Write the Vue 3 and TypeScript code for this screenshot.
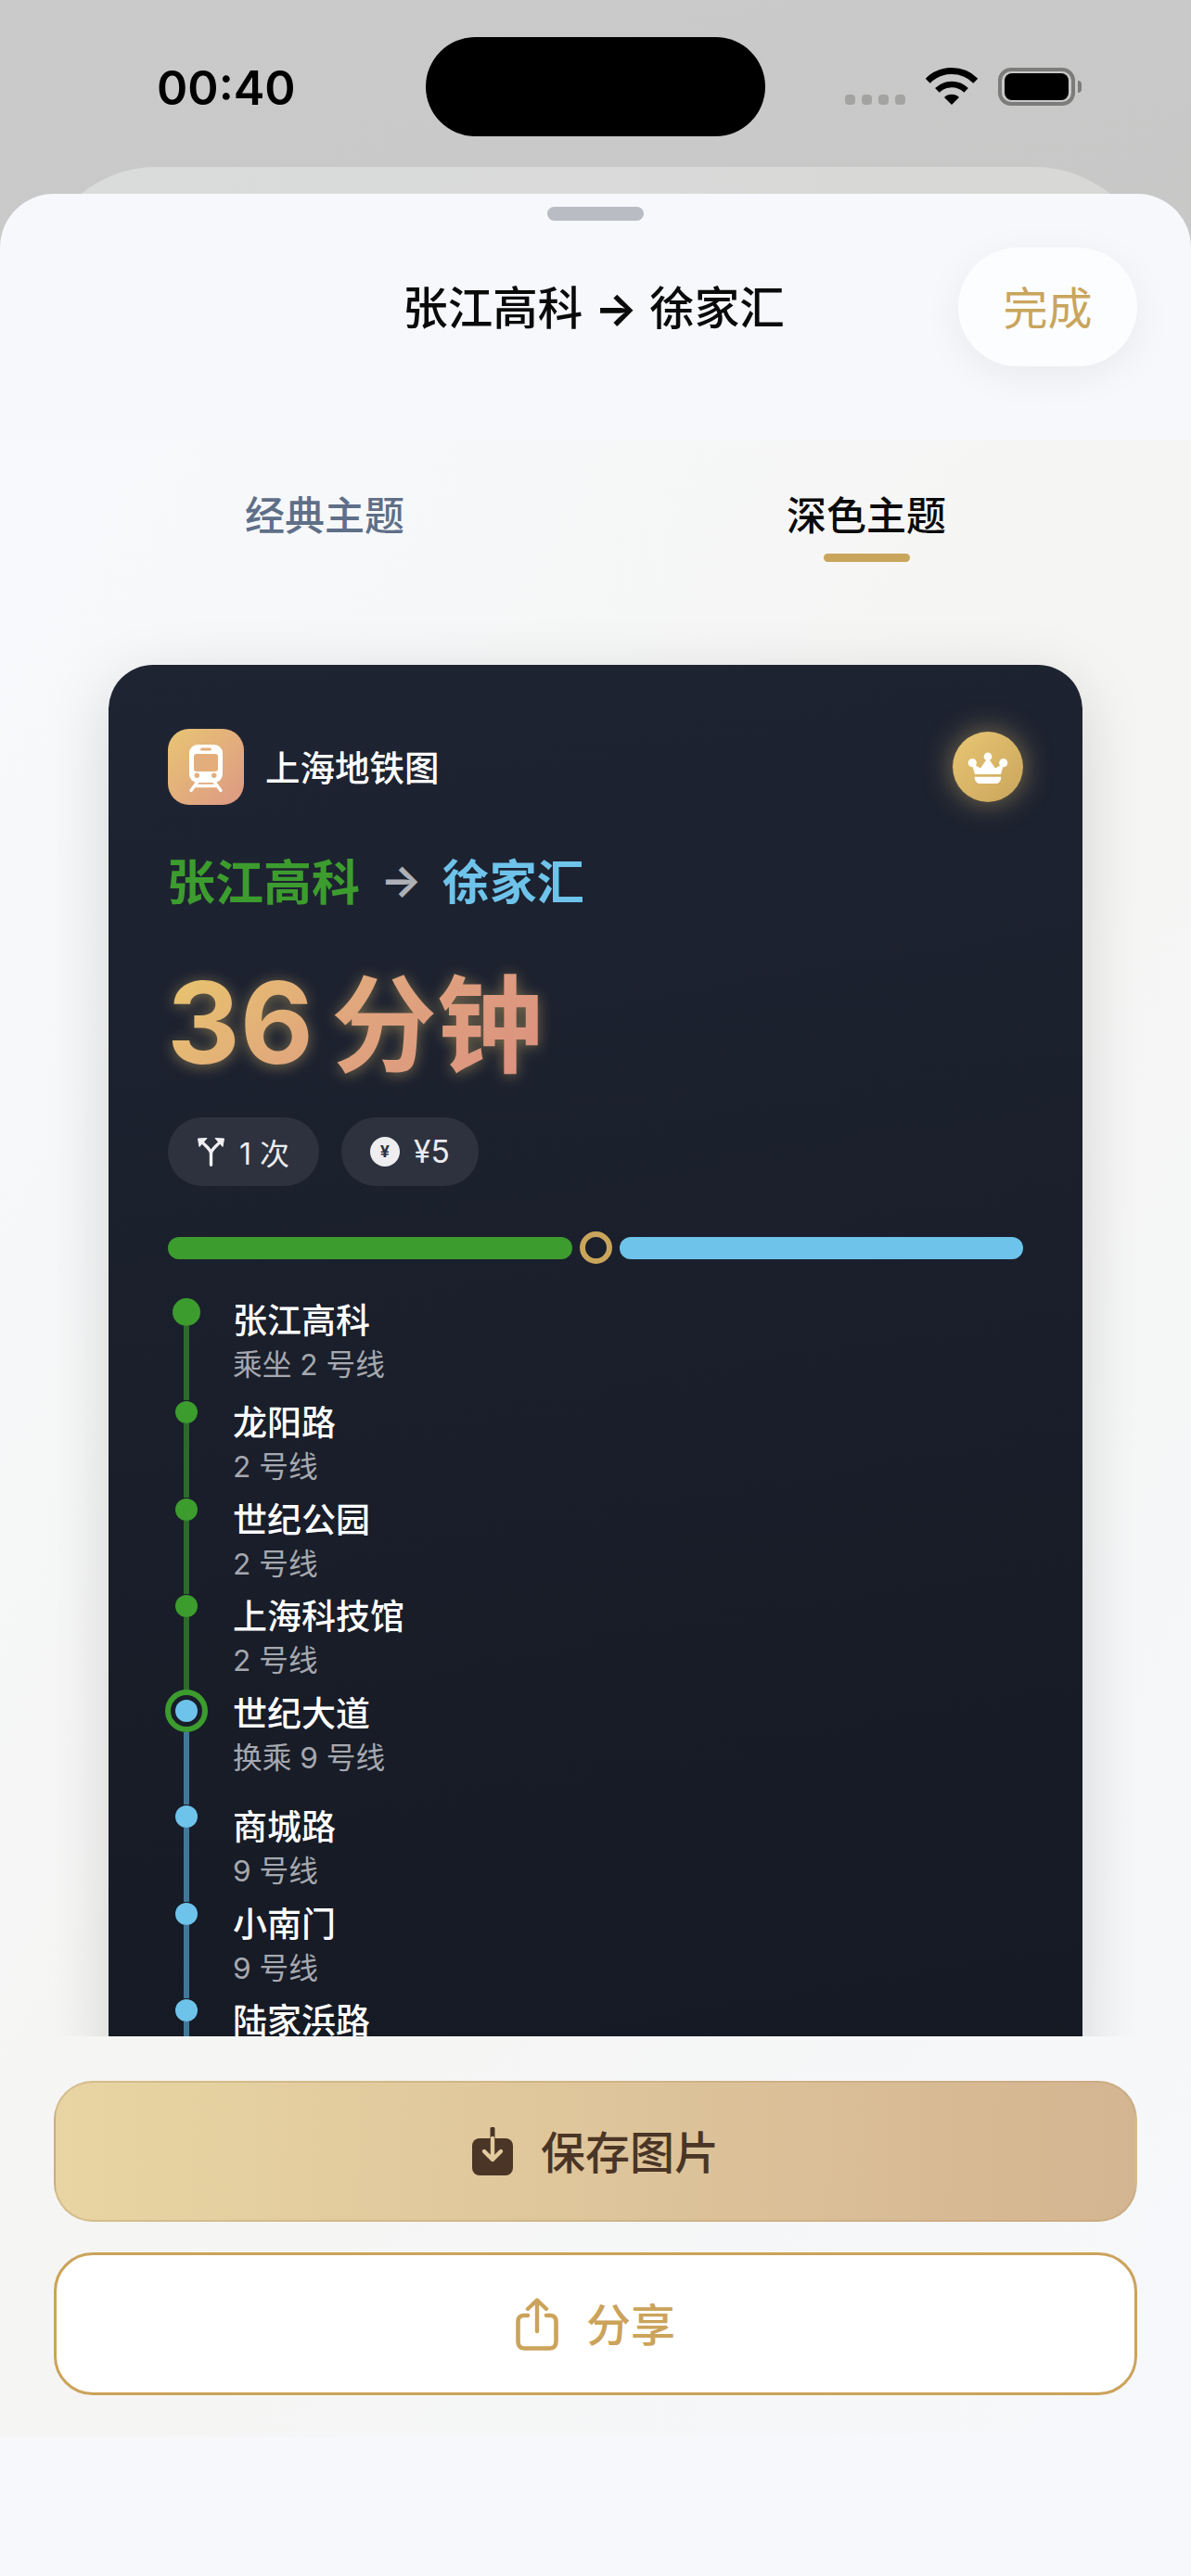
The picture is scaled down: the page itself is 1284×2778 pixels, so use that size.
<script setup lang="ts">
interface Stop {
  name: string
  sub: string
  line: 'green' | 'blue'
  kind: 'start' | 'normal' | 'transfer'
}

const stops: Stop[] = [
  { name: '张江高科', sub: '乘坐 2 号线', line: 'green', kind: 'start' },
  { name: '龙阳路', sub: '2 号线', line: 'green', kind: 'normal' },
  { name: '世纪公园', sub: '2 号线', line: 'green', kind: 'normal' },
  { name: '上海科技馆', sub: '2 号线', line: 'green', kind: 'normal' },
  { name: '世纪大道', sub: '换乘 9 号线', line: 'blue', kind: 'transfer' },
  { name: '商城路', sub: '9 号线', line: 'blue', kind: 'normal' },
  { name: '小南门', sub: '9 号线', line: 'blue', kind: 'normal' },
  { name: '陆家浜路', sub: '9 号线', line: 'blue', kind: 'normal' }
]
</script>

<template>
  <div class="screen">
    <div class="status">
      <div class="time">00:40</div>
      <div class="island"></div>
      <div class="indicators">
        <div class="signal"><i></i><i></i><i></i><i></i></div>
        <svg class="wifi" viewBox="0 0 56 40" width="56" height="40">
          <path d="M2.2 14.2A36.5 36.5 0 0 1 53.8 14.2" fill="none" stroke="#000" stroke-width="7" />
          <path d="M12.4 24.4A22 22 0 0 1 43.6 24.4" fill="none" stroke="#000" stroke-width="6.5" />
          <path d="M28 40L20 32A11.3 11.3 0 0 1 36 32Z" fill="#000" />
        </svg>
        <div class="battery"><div class="battery-fill"></div></div>
        <div class="battery-nub"></div>
      </div>
    </div>
    <div class="back-peek"><div class="back-card"></div></div>

    <main class="sheet">
      <div class="handle"></div>
      <header class="sheet-header">
        <span></span>
        <h1 class="title">张江高科 <span class="title-arrow">→</span> 徐家汇</h1>
        <button class="done">完成</button>
      </header>

      <section class="body">
        <nav class="tabs">
          <div class="tab">经典主题</div>
          <div class="tab active">深色主题<span class="tab-bar"></span></div>
        </nav>

        <div class="viewport">
          <article class="card">
            <div class="brand-row">
              <div class="brand">
                <svg class="app-icon" viewBox="0 0 82 82" width="82" height="82">
                  <defs>
                    <linearGradient id="appGrad" x1="0" y1="0" x2="1" y2="1">
                      <stop offset="0" stop-color="#e8c573" />
                      <stop offset="1" stop-color="#dd9884" />
                    </linearGradient>
                  </defs>
                  <rect width="82" height="82" rx="23" fill="url(#appGrad)" />
                  <rect x="23" y="17" width="36" height="41" rx="9" fill="#fff" />
                  <rect x="28" y="27" width="26" height="19" rx="3" fill="#e3ae7c" />
                  <rect x="35" y="20.5" width="12" height="3" rx="1.5" fill="#e3ae7c" />
                  <circle cx="31.3" cy="50.3" r="2.7" fill="#e3ae7c" />
                  <circle cx="49.7" cy="50.3" r="2.7" fill="#e3ae7c" />
                  <path d="M32 57L25 66.5M50 57L57 66.5M29 61.5H53" stroke="#fff" stroke-width="3.4" stroke-linecap="round" fill="none" />
                </svg>
                <span class="brand-name">上海地铁图</span>
              </div>
              <div class="crown">
                <svg viewBox="0 0 76 76" width="76" height="76">
                  <circle cx="38" cy="27" r="4.4" fill="#fff" />
                  <circle cx="21.3" cy="33.7" r="4.6" fill="#fff" />
                  <circle cx="54.7" cy="33.7" r="4.6" fill="#fff" />
                  <path d="M24 46L20.5 34L30 39.5L38 28L46 39.5L55.5 34L52 46Z" fill="#fff" />
                  <path d="M23.7 48.7H52.3C52.3 53 50 56 46.5 56H29.5C26 56 23.7 53 23.7 48.7Z" fill="#fff" />
                </svg>
              </div>
            </div>

            <div class="route">
              <span class="from">张江高科</span>
              <span class="arrow">→</span>
              <span class="to">徐家汇</span>
            </div>

            <div class="duration"><span class="duration-text"><span class="num">36</span> 分钟</span></div>

            <div class="chips">
              <div class="chip chip-one">
                <svg viewBox="0 0 29 31" width="29" height="31">
                  <path d="M14.5 29.3V17C14.5 12.5 9 9.5 5 4.5M14.5 17C14.5 12.5 20 9.5 24 4.5" fill="none" stroke="#f0f0f2" stroke-width="3.4" stroke-linecap="round" />
                  <path d="M0.5 1L10 0.5L2 9.5ZM28.5 1L19 0.5L27 9.5Z" fill="#f0f0f2" stroke="#f0f0f2" stroke-width="1" stroke-linejoin="round" />
                </svg>
                <span>1 次</span>
              </div>
              <div class="chip chip-two">
                <span class="coin">¥</span>
                <span class="fare">¥5</span>
              </div>
            </div>

            <div class="progress">
              <div class="bar green"></div>
              <div class="bar-ring"></div>
              <div class="bar blue"></div>
            </div>

            <ol class="stops">
              <li v-for="stop in stops" :key="stop.name" class="stop" :class="stop.kind">
                <div class="rail">
                  <div v-if="stop.kind === 'transfer'" class="node ring"><span class="node-inner"></span></div>
                  <div v-else class="node" :class="stop.line"></div>
                  <div class="rail-line" :class="stop.line"></div>
                </div>
                <div class="stop-text">
                  <div class="stop-name">{{ stop.name }}</div>
                  <div class="stop-sub">{{ stop.sub }}</div>
                </div>
              </li>
            </ol>
          </article>
        </div>

        <div class="actions">
          <button class="action save">
            <svg viewBox="0 0 44 52" width="44" height="52">
              <rect x="0" y="12" width="44" height="40" rx="8" fill="#4a3526" />
              <path d="M22 2V12" stroke="#4a3526" stroke-width="5" stroke-linecap="round" />
              <path d="M22 12V33M13 26L22 35L31 26" fill="none" stroke="#e2cb9e" stroke-width="4.4" stroke-linecap="round" stroke-linejoin="round" />
            </svg>
            <span class="action-label">保存图片</span>
          </button>
          <button class="action share">
            <svg viewBox="0 0 46 57" width="46" height="57">
              <path d="M13 19H9C5 19 2.5 21.5 2.5 25.5V47C2.5 51.5 5 54.5 9 54.5H37C41 54.5 43.5 51.5 43.5 47V25.5C43.5 21.5 41 19 37 19H33" fill="none" stroke="#cba35a" stroke-width="4.6" stroke-linecap="round" />
              <path d="M23 36V3M13 12L23 2.5L33 12" fill="none" stroke="#cba35a" stroke-width="4.4" stroke-linecap="round" stroke-linejoin="round" />
            </svg>
            <span class="action-label">分享</span>
          </button>
        </div>
      </section>
    </main>
  </div>
</template>

<style>
html, body { margin: 0; padding: 0; }
</style>

<style scoped>
* { box-sizing: border-box; }

.screen {
  width: 1284px;
  height: 2778px;
  overflow: hidden;
  display: flex;
  flex-direction: column;
  background: linear-gradient(160deg, #c9cac9 0%, #c1c1bf 100%);
  font-family: Inter, "Noto Sans CJK SC", sans-serif;
  color: #000;
}

.status {
  height: 180px;
  flex: none;
  display: grid;
  grid-template-columns: 459px 366px 1fr;
  padding-top: 40px;
}
.time {
  padding-left: 169px;
  font-size: 50.5px;
  line-height: 64px;
  margin-top: 23px;
  font-weight: 600;
}
.island {
  height: 107px;
  border-radius: 54px;
  background: #000;
}
.indicators {
  display: flex;
  align-items: flex-start;
  padding: 33px 0 0 86px;
}
.signal {
  display: flex;
  gap: 7px;
  margin-top: 29px;
  margin-right: 22px;
}
.signal i {
  display: block;
  width: 11px;
  height: 11px;
  border-radius: 4px;
  background: #a3a3a1;
}
.wifi { margin-right: 22px; }
.battery {
  width: 83px;
  height: 41px;
  border: 4px solid #7c7c7a;
  border-radius: 14px;
  padding: 2px 3px;
}
.battery-fill {
  width: 100%;
  height: 100%;
  background: #000;
  border-radius: 8px;
}
.battery-nub {
  width: 4px;
  height: 13px;
  margin: 14px 0 0 3px;
  background: #7c7c7a;
  border-radius: 0 4px 4px 0;
}

.back-peek {
  flex: none;
  height: 29px;
  padding: 0 39px;
  overflow: hidden;
}
.back-card {
  height: 300px;
  background: linear-gradient(90deg, #dadcdc, #d8d8d6);
  border-radius: 130px;
}

.sheet {
  flex: 1;
  display: flex;
  flex-direction: column;
  background: #f6f8fc;
  border-radius: 58px 58px 0 0;
}
.handle {
  flex: none;
  width: 104px;
  height: 15px;
  margin: 14px auto 0;
  border-radius: 8px;
  background: #b9bcc2;
}
.sheet-header {
  flex: none;
  display: grid;
  grid-template-columns: 1fr auto 1fr;
  align-items: center;
  margin-top: 29px;
  padding: 0 58px 80px;
}
.title {
  margin: 0;
  padding-top: 4px;
  font-size: 48.5px;
  line-height: 64px;
  font-weight: 500;
  color: #0a0a0a;
  transform: translateX(-2px);
}
.title-arrow { font-weight: 700; }
.done {
  justify-self: end;
  width: 193px;
  height: 128px;
  border: 0;
  padding: 3px 0 0;
  border-radius: 64px;
  background: #fcfdfe;
  color: #c9a55c;
  font: 400 48px/1 Inter, "Noto Sans CJK SC", sans-serif;
  box-shadow: 0 10px 44px rgba(0, 0, 0, 0.06);
}

.body {
  height: 2153px;
  flex: none;
  display: flex;
  flex-direction: column;
  background: linear-gradient(to bottom right, #f7f9fc 0%, #f5f5f3 50%, #f6f8fb 100%);
}

.tabs {
  flex: none;
  height: 165px;
  display: grid;
  grid-template-columns: 1fr 1fr;
  padding: 56px 58px 0;
}
.tab {
  display: flex;
  flex-direction: column;
  align-items: center;
  font-size: 43px;
  line-height: 50px;
  font-weight: 500;
  color: #5f6f88;
}
.tab.active { color: #0a0a0a; }
.tab-bar {
  width: 93px;
  height: 9px;
  margin-top: 16px;
  border-radius: 5px;
  background: #c9a55c;
}

.viewport {
  flex: none;
  height: 1556px;
  margin: 0 58px 0 59px;
  padding: 77px 59px 0 58px;
  overflow: hidden;
}
.card {
  height: 1700px;
  padding: 69px 64px 0;
  border-radius: 48px;
  background: linear-gradient(170deg, #1f2433 0%, #131821 100%);
  box-shadow: 0 18px 70px rgba(0, 0, 0, 0.14);
  display: flex;
  flex-direction: column;
}

.brand-row {
  display: flex;
  justify-content: space-between;
  align-items: center;
  height: 82px;
}
.brand {
  display: flex;
  align-items: center;
  gap: 23px;
}
.app-icon { display: block; }
.brand-name {
  padding-bottom: 4px;
  font-size: 37.5px;
  font-weight: 500;
  color: #fff;
}
.crown {
  width: 76px;
  height: 76px;
  border-radius: 50%;
  background: linear-gradient(135deg, #e8c673, #c9a55c);
  box-shadow: 0 0 30px rgba(232, 198, 115, 0.5);
}
.crown svg { display: block; }

.route {
  display: flex;
  align-items: center;
  gap: 22px;
  height: 60px;
  margin: 50px 0 0 -1px;
  font-size: 52px;
  font-weight: 700;
}
.from { color: #3c9c2e; }
.to {
  color: #6ec3ea;
  font-size: 51px;
}
.arrow {
  color: #aeb0b6;
  font-weight: 700;
  font-size: 47px;
}

.duration {
  display: flex;
  height: 140px;
  margin: 55px 0 0 -1px;
  font-size: 114px;
  line-height: 140px;
  font-weight: 700;
  filter: drop-shadow(0 2px 8px rgba(232, 198, 115, 0.45));
}
.duration-text {
  background: linear-gradient(135deg, #e9c76c 0%, #e0a47e 50%, #db8f80 100%);
  -webkit-background-clip: text;
  background-clip: text;
  color: transparent;
  word-spacing: -8px;
}
.num { font-size: 122px; }

.chips {
  display: flex;
  gap: 24px;
  margin-top: 32px;
}
.chip {
  display: flex;
  align-items: center;
  height: 74px;
  border-radius: 37px;
  background: #2e323f;
  color: #ececee;
  font-size: 32px;
}
.chip-one {
  width: 163px;
  padding-left: 32px;
  gap: 16px;
}
.chip-two {
  width: 148px;
  padding-left: 31px;
  gap: 15px;
}
.fare { font-size: 33.5px; }
.coin {
  width: 32px;
  height: 32px;
  border-radius: 50%;
  background: #eeeef0;
  color: #2e323f;
  font-size: 18px;
  font-weight: 700;
  line-height: 32px;
  text-align: center;
}

.progress {
  display: flex;
  align-items: center;
  gap: 8px;
  margin-top: 49px;
}
.bar {
  flex: 1;
  height: 24px;
  border-radius: 12px;
}
.bar.green { background: #3c9c2e; }
.bar.blue { background: #6ec3ea; }
.bar-ring {
  flex: none;
  width: 35px;
  height: 35px;
  border-radius: 50%;
  border: 6px solid #c9a55c;
}

.stops {
  list-style: none;
  margin: 37px 0 0;
  padding: 0;
}
.stop {
  display: flex;
  gap: 30px;
}
.stop-text { padding-bottom: 10.6px; }
.stop.start .stop-text { padding-bottom: 16px; }
.stop.transfer .stop-text { padding-bottom: 28.2px; }
.rail {
  flex: none;
  width: 40px;
  display: flex;
  flex-direction: column;
  align-items: center;
}
.node {
  flex: none;
  width: 24px;
  height: 24px;
  margin-top: 1px;
  border-radius: 50%;
}
.node.green { background: #3c9c2e; }
.node.blue { background: #6ec3ea; }
.stop.start .node {
  width: 30px;
  height: 30px;
  margin-top: 0;
}
.node.ring {
  width: 46px;
  height: 46px;
  margin-top: -1.5px;
  border: 6px solid #3c9c2e;
  display: flex;
  align-items: center;
  justify-content: center;
  background: #181d29;
}
.node-inner {
  width: 24px;
  height: 24px;
  border-radius: 50%;
  background: #6ec3ea;
}
.rail-line {
  flex: 1;
  width: 6px;
}
.rail-line.green { background: #2d6a2b; }
.rail-line.blue { background: #41789a; }
.stop-name {
  padding-top: 1px;
  font-size: 37px;
  line-height: 48px;
  font-weight: 500;
  color: #fff;
}
.stop-sub {
  font-size: 31.7px;
  line-height: 45px;
  color: #a6a8af;
}

.actions {
  flex: none;
  display: flex;
  flex-direction: column;
  gap: 33px;
  padding: 48px 58px 0 58px;
}
.action {
  flex: none;
  display: flex;
  align-items: center;
  justify-content: center;
  width: 100%;
  gap: 30px;
  border-radius: 42px;
  font: 500 48px/1 Inter, "Noto Sans CJK SC", sans-serif;
}
.action svg { display: block; }
.action-label { padding-top: 3px; }
.save {
  height: 152px;
  border: 2px solid rgba(190, 160, 110, 0.45);
  background: linear-gradient(92deg, #e8d5a3 0%, #d4b592 100%);
  color: #4a3526;
}
.share {
  height: 154px;
  border: 3px solid #cba35a;
  background: #fff;
  color: #cba35a;
}
</style>
